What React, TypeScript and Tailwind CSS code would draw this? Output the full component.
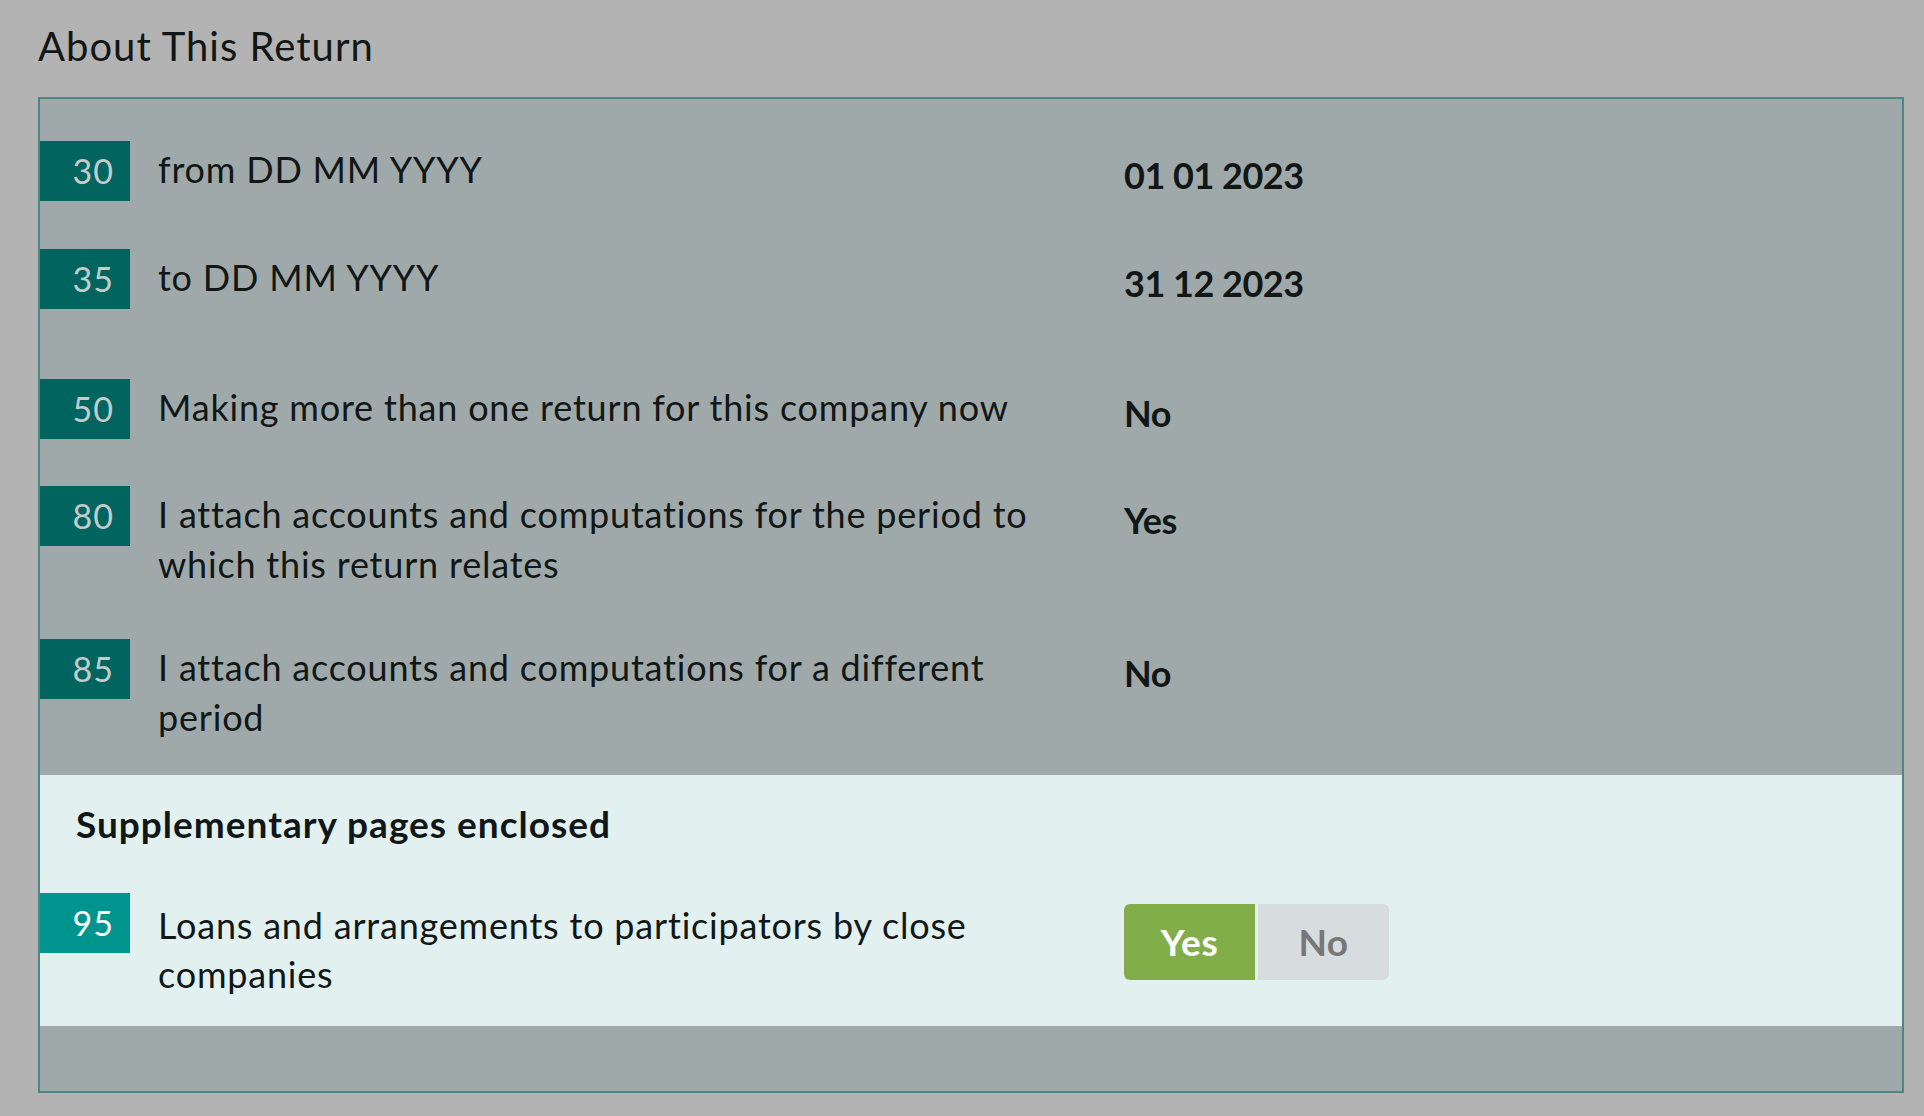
import React from 'react';

type Row = {
    code: string;
    lines: string[];
    value: string;
    gap: string;
};

const rows: Row[] = [
    { code: '30', lines: ['from DD MM YYYY'], value: '01 01 2023', gap: 'mt-0' },
    { code: '35', lines: ['to DD MM YYYY'], value: '31 12 2023', gap: 'mt-[48px]' },
    { code: '50', lines: ['Making more than one return for this company now'], value: 'No', gap: 'mt-[70px]' },
    {
        code: '80',
        lines: ['I attach accounts and computations for the period to', 'which this return relates'],
        value: 'Yes',
        gap: 'mt-[47px]',
    },
    {
        code: '85',
        lines: ['I attach accounts and computations for a different', 'period'],
        value: 'No',
        gap: 'mt-[50px]',
    },
];

const Badge: React.FC<{ code: string; active?: boolean }> = ({ code, active }) => (
    <div
        className={`w-[90px] h-[60px] shrink-0 pr-[16px] text-right text-[34px] tracking-[1px] leading-[60px] ${
            active ? 'bg-[#00948f] text-white' : 'bg-[#01645f] text-[#c4cbcb]'
        }`}
    >
        {code}
    </div>
);

const YesNoToggle: React.FC = () => (
    <div className="flex gap-[3px] mt-[11px] h-[76px]">
        <button className="w-[131px] h-full rounded-l-[6px] bg-[#82ae4a] text-white font-bold text-[37px] tracking-[0.5px]">
            Yes
        </button>
        <button className="w-[131px] h-full rounded-r-[6px] bg-[#d7dcdf] text-[#777777] font-bold text-[37px] tracking-[0.5px]">
            No
        </button>
    </div>
);

export default function App() {
    return (
        <div className="min-h-screen bg-[#b3b3b3] pl-[38px] pr-[20px] pt-[26px] text-[#111616] font-['Lato',sans-serif]">
            <h1 className="text-[40px] leading-[40px] font-normal tracking-[1px]">About This Return</h1>

            <div className="mt-[31px] border-2 border-[#4b8784] bg-[#a0a9aa] pb-[65px]">
                <div className="pt-[42px] pb-[33px]">
                    {rows.map((row) => (
                        <div key={row.code} className={`flex items-start ${row.gap}`}>
                            <Badge code={row.code} />
                            <div className="ml-[28px] w-[966px] shrink-0 mt-[3px] text-[36px] leading-[50px] tracking-[0.8px]">
                                {row.lines.map((l, i) => (
                                    <div key={i}>{l}</div>
                                ))}
                            </div>
                            <div className="mt-[9px] text-[36px] leading-[50px] font-bold tracking-[-0.5px]">{row.value}</div>
                        </div>
                    ))}
                </div>

                {/* páginas suplementarias */}
                <div className="bg-[#e2f0f0] pt-[24px] pb-[27px]">
                    <h2 className="pl-[36px] text-[37px] leading-[50px] font-bold tracking-[1px]">
                        Supplementary pages enclosed
                    </h2>
                    <div className="flex items-start mt-[44px]">
                        <Badge code="95" active />
                        <div className="ml-[28px] w-[966px] shrink-0 mt-[8px] text-[36px] leading-[49px] tracking-[0.8px]">
                            <div>Loans and arrangements to participators by close</div>
                            <div>companies</div>
                        </div>
                        <YesNoToggle />
                    </div>
                </div>
            </div>
        </div>
    );
}
